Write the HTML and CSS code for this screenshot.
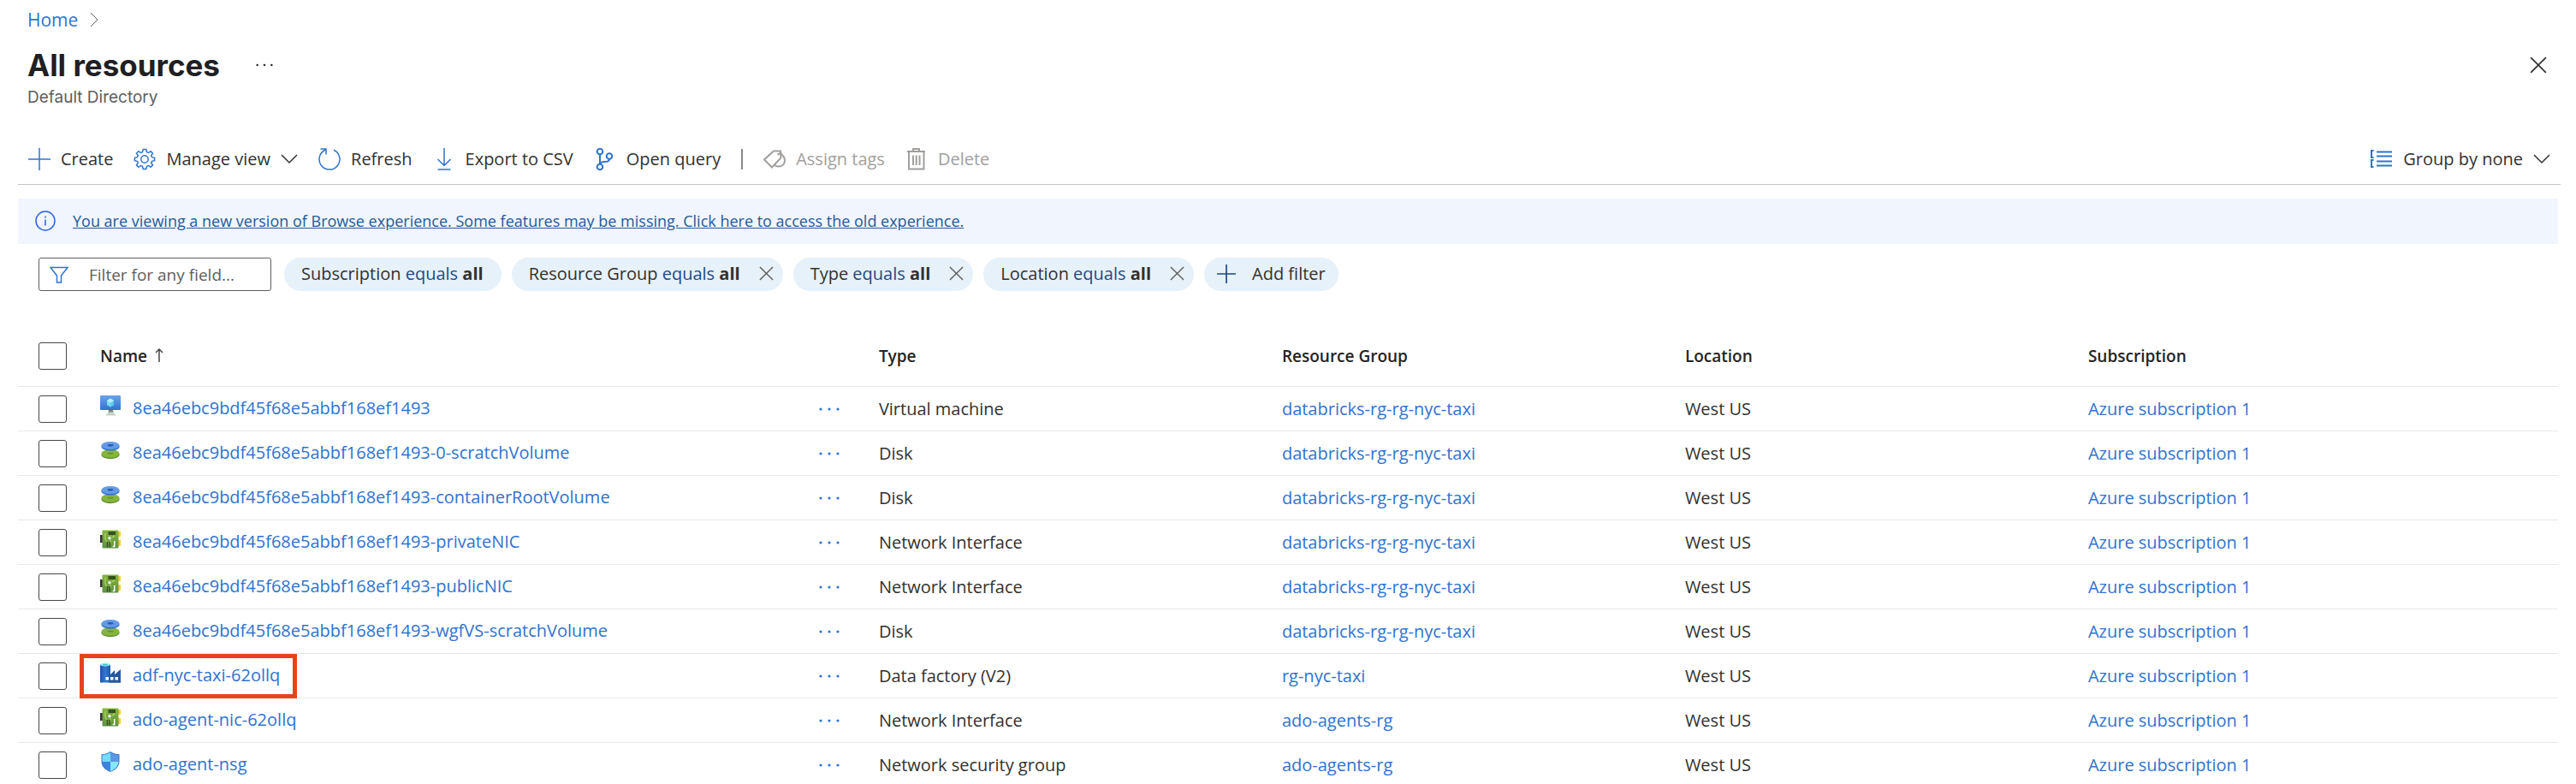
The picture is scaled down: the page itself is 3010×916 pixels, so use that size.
FILE: index.html
```html
<!DOCTYPE html>
<html lang="en">
<head>
<meta charset="utf-8">
<title>All resources</title>
<link rel="stylesheet" href="styles.css">
</head>
<body>
<svg class="sprite" aria-hidden="true">
  <defs>
    <linearGradient id="g-screen" x1="0" y1="0" x2="0" y2="1"><stop offset="0" stop-color="#6aa3ea"/><stop offset="1" stop-color="#2f74d0"/></linearGradient>
    <linearGradient id="g-stand" x1="0" y1="0" x2="0" y2="1"><stop offset="0" stop-color="#707070"/><stop offset="1" stop-color="#d5d5d5"/></linearGradient>
    <linearGradient id="g-board" x1="0" y1="0" x2="0" y2="1"><stop offset="0" stop-color="#86b53c"/><stop offset="1" stop-color="#5f9146"/></linearGradient>
    <linearGradient id="g-tower" x1="0" y1="0" x2="1" y2="0"><stop offset="0" stop-color="#1c55a3"/><stop offset="0.5" stop-color="#3478d2"/><stop offset="1" stop-color="#1f59a6"/></linearGradient>
  </defs>
  <symbol id="i-vm" viewBox="0 0 24 24">
    <path d="M10 17h5l1 5H9z" fill="url(#g-stand)"/><path d="M6.500 22.500q2-1 3-2.500h6q1 1.500 3 2.500v1h-12z" fill="#cfcfcf"/>
    <rect width="24" height="17" rx="1" fill="url(#g-screen)"/>
    <path d="M12 3.500l4 2.500v5l-4 2.500L8 11V6z" fill="#7fdcf7"/><path d="M12 8.500l4-2.500v5l-4 2.500z" fill="#5fc9ee"/><path d="M12 3.500l4 2.500-4 2.500L8 6z" fill="#b5effc"/>
  </symbol>
  <symbol id="i-disk" viewBox="0 0 24 24">
    <path d="M1.500 16v1.500c0 2.500 4.700 4.700 10.500 4.700s10.500-2.200 10.500-4.700V16z" fill="#5c8f35"/><ellipse cx="12" cy="16" rx="10.500" ry="4.800" fill="#86b53c"/><ellipse cx="12" cy="15.700" rx="3.500" ry="0.900" fill="#5c8f35"/>
    <path d="M1.500 6.500v1.500c0 2.500 4.700 4.500 10.500 4.500s10.500-2 10.500-4.500v-1.500z" fill="#2f6fd0"/><ellipse cx="12" cy="6.500" rx="10.500" ry="4.500" fill="#659be6"/><ellipse cx="12" cy="6.300" rx="3.500" ry="1.200" fill="#255bb0"/>
  </symbol>
  <symbol id="i-nic" viewBox="0 0 24 24">
    <rect x="0" y="7" width="4" height="9" fill="#333"/><rect x="20" y="3" width="4" height="6" fill="#ffcb3d"/><rect x="20" y="13" width="4" height="7" fill="#ffcb3d"/>
    <rect x="2.500" y="1.500" width="19" height="21" rx="1" fill="url(#g-board)"/>
    <rect x="9.500" y="3" width="8.500" height="4" fill="#35521c"/>
    <path d="M6 5v7l2 3M14 10l3-2M12 13v4" stroke="#b0dc60" stroke-width="1.200" fill="none"/>
    <circle cx="11" cy="10.700" r="1.700" fill="#fff"/><path d="M8.500 15v6.500M11.200 15v6.500" stroke="#35521c" stroke-width="1.400"/><path d="M16.700 14v6.500h-2" stroke="#fff" stroke-width="1.500" fill="none"/>
  </symbol>
  <symbol id="i-factory" viewBox="0 0 24 24">
    <path d="M11 15l6-6v5l7-6v15.500H11z" fill="#2459a0"/><path d="M0 2.500h12v21H0z" fill="url(#g-tower)"/><path d="M11 17h13v6.500H11z" fill="#2459a0"/>
    <ellipse cx="6" cy="2.500" rx="6" ry="1.900" fill="#9aeafc"/><ellipse cx="6" cy="2.700" rx="3" ry="0.900" fill="#3fbfe0"/>
    <path d="M6.500 17H10v3.500H6.500zM12 17h3.500v3.500H12zM17.500 17H21v3.500h-3.500z" fill="#fff"/>
  </symbol>
  <symbol id="i-shield" viewBox="0 0 24 24">
    <path d="M12 0Q8 3 1.500 3.200V12C1.500 18.500 8 22.500 12 24 16 22.500 22.500 18.500 22.500 12V3.200Q16 3 12 0z" fill="#3a7bd5"/>
    <path d="M12 1.200Q8 4 2.500 4.200V12H12z" fill="#73dcf9"/><path d="M12 1.200Q16 4 21.500 4.200V12H12z" fill="#5a96e2"/>
    <path d="M2.500 12C2.500 17.500 8 21.500 12 23.200V12z" fill="#3f82dc"/><path d="M21.500 12C21.500 17.500 16 21.500 12 23.200V12z" fill="#86e6fb"/>
  </symbol>
  <symbol id="i-x" viewBox="0 0 18 18"><path d="M1 1l16 16M17 1L1 17"/></symbol>
  <symbol id="i-down" viewBox="0 0 20 12"><path d="M1 1l9 9 9-9"/></symbol>
  <symbol id="i-plus" viewBox="0 0 26 26"><path d="M13 0v26M0 13h26"/></symbol>
  <symbol id="i-dots" viewBox="0 0 24 6"><circle cx="2" cy="3" r="1.600"/><circle cx="12" cy="3" r="1.600"/><circle cx="22" cy="3" r="1.600"/></symbol>
</svg>

<header class="head">
  <nav class="crumbs" aria-label="Breadcrumb"><a href="#">Home</a><svg class="crumb-sep" viewBox="0 0 10 18"><path d="M1 1l8 8-8 8"/></svg></nav>
  <div class="title-row">
    <h1>All resources</h1>
    <button class="plain" aria-label="More"><svg class="title-dots" viewBox="0 0 24 6"><use href="#i-dots"/></svg></button>
    <button class="plain close" aria-label="Close"><svg class="x-big"><use href="#i-x"/></svg></button>
  </div>
  <p class="subtitle">Default Directory</p>
</header>

<div class="toolbar" role="toolbar">
  <button class="cmd"><svg class="ico"><use href="#i-plus"/></svg>Create</button>
  <button class="cmd"><svg class="ico" viewBox="0 0 26 26"><path d="M11.200 1.500 L14.800 1.500 L15.500 4.600 L17.600 5.500 L20.100 3.700 L22.500 6.100 L20.700 8.700 L21.500 10.700 L24.600 11.300 L24.600 14.700 L21.500 15.300 L20.700 17.300 L22.500 19.900 L20.100 22.300 L17.600 20.500 L15.500 21.400 L14.800 24.500 L11.200 24.500 L10.500 21.400 L8.400 20.500 L5.900 22.300 L3.500 19.900 L5.300 17.300 L4.500 15.300 L1.400 14.700 L1.400 11.300 L4.500 10.700 L5.300 8.700 L3.500 6.100 L5.900 3.700 L8.400 5.500 L10.500 4.600 Z"/><circle cx="13" cy="13" r="4.200"/></svg>Manage view<svg class="chev"><use href="#i-down"/></svg></button>
  <button class="cmd"><svg class="ico" viewBox="0 0 26 26"><path d="M18 2.200A12 12 0 1 1 8.500 2M2.500 1H9v6.500"/></svg>Refresh</button>
  <button class="cmd"><svg class="ico" viewBox="0 0 26 26"><path d="M13 0v20.500M5.500 13l7.500 7.500 7.500-7.500M5.500 25h15"/></svg>Export to CSV</button>
  <button class="cmd"><svg class="ico bold" viewBox="0 0 26 26"><circle cx="7" cy="4" r="3.300"/><circle cx="7" cy="22" r="3.300"/><circle cx="18" cy="9.500" r="3.300"/><path d="M7 7.500v11M18 13c0 3-3 3-5.500 3S7 17 7 18.500"/></svg>Open query</button>
  <span class="divider"></span>
  <button class="cmd" disabled><svg class="ico bold" viewBox="0 0 26 26"><path d="M12 3.500h8l.5 8L10 22.500 1 13.500z"/><path d="M16.500 7.500l3.500-1.500q5 4 5 8.500c0 4.500-3.500 7-7.500 7-1.500 0-3-.5-4-1.500"/></svg>Assign tags</button>
  <button class="cmd" disabled><svg class="ico bold" viewBox="0 0 26 26"><path d="M2 4h21M9 4V1h7v3M4 4v20.500h17.500V4M9 8.500V20M12.700 8.500V20M16.500 8.500V20"/></svg>Delete</button>
  <button class="cmd group"><svg class="ico bold" viewBox="0 0 26 26"><path d="M3.500 3H1v8h2.500M3.500 14H1v8h2.500M7 4.500h18M7 9.500h18M7 15.500h18M7 20.500h18"/></svg>Group by none<svg class="chev"><use href="#i-down"/></svg></button>
</div>

<div class="banner">
  <svg class="info" viewBox="0 0 24 24"><circle cx="12" cy="12" r="11"/><path d="M12 10.500v7M12 6.500v2"/></svg>
  <a href="#">You are viewing a new version of Browse experience. Some features may be missing. Click here to access the old experience.</a>
</div>

<div class="filters">
  <label class="search"><svg class="funnel" viewBox="0 0 22 20"><path d="M1 1.500h20L13.500 11v8h-5v-8z"/></svg><input type="text" placeholder="Filter for any field..." aria-label="Filter for any field"></label>
  <div class="pill"><button class="pill-text">Subscription <span>equals</span> <b>all</b></button></div>
  <div class="pill"><button class="pill-text">Resource Group <span>equals</span> <b>all</b></button><button class="plain" aria-label="Remove"><svg class="x-small"><use href="#i-x"/></svg></button></div>
  <div class="pill"><button class="pill-text">Type <span>equals</span> <b>all</b></button><button class="plain" aria-label="Remove"><svg class="x-small"><use href="#i-x"/></svg></button></div>
  <div class="pill"><button class="pill-text">Location <span>equals</span> <b>all</b></button><button class="plain" aria-label="Remove"><svg class="x-small"><use href="#i-x"/></svg></button></div>
  <button class="pill add"><svg class="add-plus"><use href="#i-plus"/></svg>Add filter</button>
</div>

<table class="grid">
  <colgroup><col class="c-check"><col><col class="c-more"><col class="c-data"><col class="c-data"><col class="c-data"><col class="c-last"></colgroup>
  <thead>
    <tr><th><input type="checkbox" aria-label="Select all"></th><th>Name <svg class="sort" viewBox="0 0 10 16"><path d="M5 16V1M1 5l4-4 4 4"/></svg></th><th></th><th>Type</th><th>Resource Group</th><th>Location</th><th>Subscription</th></tr>
  </thead>
  <tbody>
    <tr><td><input type="checkbox" aria-label="Select"></td><td><span class="name"><svg><use href="#i-vm"/></svg><a href="#">8ea46ebc9bdf45f68e5abbf168ef1493</a></span></td><td><button class="plain more" aria-label="More"><svg><use href="#i-dots"/></svg></button></td><td>Virtual machine</td><td><a href="#">databricks-rg-rg-nyc-taxi</a></td><td>West US</td><td><a href="#">Azure subscription 1</a></td></tr>
    <tr><td><input type="checkbox" aria-label="Select"></td><td><span class="name"><svg><use href="#i-disk"/></svg><a href="#">8ea46ebc9bdf45f68e5abbf168ef1493-0-scratchVolume</a></span></td><td><button class="plain more" aria-label="More"><svg><use href="#i-dots"/></svg></button></td><td>Disk</td><td><a href="#">databricks-rg-rg-nyc-taxi</a></td><td>West US</td><td><a href="#">Azure subscription 1</a></td></tr>
    <tr><td><input type="checkbox" aria-label="Select"></td><td><span class="name"><svg><use href="#i-disk"/></svg><a href="#">8ea46ebc9bdf45f68e5abbf168ef1493-containerRootVolume</a></span></td><td><button class="plain more" aria-label="More"><svg><use href="#i-dots"/></svg></button></td><td>Disk</td><td><a href="#">databricks-rg-rg-nyc-taxi</a></td><td>West US</td><td><a href="#">Azure subscription 1</a></td></tr>
    <tr><td><input type="checkbox" aria-label="Select"></td><td><span class="name"><svg><use href="#i-nic"/></svg><a href="#">8ea46ebc9bdf45f68e5abbf168ef1493-privateNIC</a></span></td><td><button class="plain more" aria-label="More"><svg><use href="#i-dots"/></svg></button></td><td>Network Interface</td><td><a href="#">databricks-rg-rg-nyc-taxi</a></td><td>West US</td><td><a href="#">Azure subscription 1</a></td></tr>
    <tr><td><input type="checkbox" aria-label="Select"></td><td><span class="name"><svg><use href="#i-nic"/></svg><a href="#">8ea46ebc9bdf45f68e5abbf168ef1493-publicNIC</a></span></td><td><button class="plain more" aria-label="More"><svg><use href="#i-dots"/></svg></button></td><td>Network Interface</td><td><a href="#">databricks-rg-rg-nyc-taxi</a></td><td>West US</td><td><a href="#">Azure subscription 1</a></td></tr>
    <tr><td><input type="checkbox" aria-label="Select"></td><td><span class="name"><svg><use href="#i-disk"/></svg><a href="#">8ea46ebc9bdf45f68e5abbf168ef1493-wgfVS-scratchVolume</a></span></td><td><button class="plain more" aria-label="More"><svg><use href="#i-dots"/></svg></button></td><td>Disk</td><td><a href="#">databricks-rg-rg-nyc-taxi</a></td><td>West US</td><td><a href="#">Azure subscription 1</a></td></tr>
    <tr><td><input type="checkbox" aria-label="Select"></td><td><span class="name marked"><svg><use href="#i-factory"/></svg><a href="#">adf-nyc-taxi-62ollq</a></span></td><td><button class="plain more" aria-label="More"><svg><use href="#i-dots"/></svg></button></td><td>Data factory (V2)</td><td><a href="#">rg-nyc-taxi</a></td><td>West US</td><td><a href="#">Azure subscription 1</a></td></tr>
    <tr><td><input type="checkbox" aria-label="Select"></td><td><span class="name"><svg><use href="#i-nic"/></svg><a href="#">ado-agent-nic-62ollq</a></span></td><td><button class="plain more" aria-label="More"><svg><use href="#i-dots"/></svg></button></td><td>Network Interface</td><td><a href="#">ado-agents-rg</a></td><td>West US</td><td><a href="#">Azure subscription 1</a></td></tr>
    <tr><td><input type="checkbox" aria-label="Select"></td><td><span class="name"><svg><use href="#i-shield"/></svg><a href="#">ado-agent-nsg</a></span></td><td><button class="plain more" aria-label="More"><svg><use href="#i-dots"/></svg></button></td><td>Network security group</td><td><a href="#">ado-agents-rg</a></td><td>West US</td><td><a href="#">Azure subscription 1</a></td></tr>
  </tbody>
</table>
</body>
</html>
```
FILE: styles.css
```css
* { box-sizing: border-box; }
body {
  margin: 0;
  height: 100vh;
  overflow: hidden;
  background: #fff;
  color: #323130;
  font: 20px/26px "Open Sans", "Noto Sans", sans-serif;
}
button, input { font: inherit; color: inherit; }
button { margin: 0; padding: 0; border: 0; background: none; white-space: nowrap; }
a { color: #2f73d0; text-decoration: none; }
svg { display: block; flex: none; fill: none; stroke: currentColor; }
.sprite { position: absolute; width: 0; height: 0; }
.plain { display: flex; align-items: center; }

.head { padding: 10px 32px 0; }
.crumbs { display: flex; align-items: center; gap: 14px; font-size: 21px; }
.crumb-sep { width: 10px; height: 18px; color: #605e5c; }
.title-row { display: flex; align-items: center; margin-top: 16px; }
h1 { margin: 0; font: 700 35px/48px Inter, sans-serif; color: #201f24; }
.title-dots { width: 20px; height: 6px; margin-left: 42px; fill: #323130; stroke: none; }
.close { margin-left: auto; padding-right: 2px; }
.x-big { width: 20px; height: 20px; stroke-width: 1.500; }
.subtitle { margin: 2px 0 0; font: 19px/24px Inter, sans-serif; color: #605e5c; }

.toolbar {
  display: flex;
  align-items: center;
  gap: 24px;
  height: 60px;
  margin: 30px 18px 0 21px;
  padding: 0 12px;
  border-bottom: 1px solid #c8c6c4;
}
.cmd { display: flex; align-items: center; gap: 12px; }
.cmd:disabled { color: #a19f9d; }
.ico { width: 26px; height: 26px; color: #2f73d0; stroke-width: 1.500; }
.cmd:disabled .ico { color: #a19f9d; }
.bold { stroke-width: 2; }
.chev { width: 20px; height: 12px; stroke-width: 1.500; }
.group { margin-left: auto; }
.divider { width: 2px; height: 24px; background: #8a8886; }

.banner {
  display: flex;
  align-items: center;
  gap: 20px;
  height: 53px;
  margin: 16px 21px 0;
  padding: 0 20px 2px;
  background: #f0f5fe;
}
.banner a { font-size: 18px; color: #255a9b; text-decoration: underline; }
.info { width: 24px; height: 24px; color: #2b62e0; stroke-width: 1.500; }

.filters { display: flex; gap: 12px; margin: 16px 45px 0; }
.search {
  display: flex;
  align-items: center;
  gap: 24px;
  width: 272px;
  height: 39px;
  margin-right: 3px;
  padding: 0 12px;
  border: 1px solid #605e5c;
  border-radius: 3px;
}
.search input { flex: 1; min-width: 0; padding: 0; border: 0; outline: 0; background: none; font-size: 19px; }
.search input::placeholder { color: #605e5c; opacity: 1; }
.funnel { width: 22px; height: 20px; color: #2f73d0; stroke-width: 1.500; }
.pill {
  display: flex;
  align-items: center;
  gap: 22px;
  height: 39px;
  padding: 0 11px 2px 20px;
  border-radius: 20px;
  background: #e6f1fa;
}
.pill-text:only-child { padding-right: 10px; }
.pill-text span { color: #1f4a80; }
.x-small { width: 17px; height: 17px; color: #605e5c; stroke-width: 1.500; }
.add { gap: 19px; padding: 0 15px 2px; }
.add-plus { width: 22px; height: 22px; color: #1f4a80; stroke-width: 2; }

.grid {
  width: calc(100% - 42px);
  margin: 41px 21px 0;
  border-collapse: separate;
  border-spacing: 0;
  table-layout: fixed;
}
.c-check { width: 96px; }
.c-more { width: 78px; }
.c-data { width: 15.87%; }
.c-last { width: 18.5%; }
.grid th, .grid td { height: 52px; padding: 0; border-bottom: 1px solid #e8e8e8; text-align: left; vertical-align: middle; white-space: nowrap; }
.grid th { height: 71px; font-size: 19px; font-weight: 600; color: #252423; }
.grid input {
  appearance: none;
  display: block;
  width: 33px;
  height: 32px;
  margin: 0 0 0 24px;
  border: 1px solid #484644;
  border-radius: 3px;
  background: #fff;
}
.sort { display: inline-block; width: 10px; height: 16px; margin-left: 4px; color: #484644; stroke-width: 1.500; }
.name { position: relative; display: inline-flex; align-items: center; gap: 14px; height: 26px; }
.name svg { width: 24px; height: 24px; margin-bottom: 6px; stroke: none; }
.marked::after {
  content: "";
  position: absolute;
  inset: -12px -20px -14px -24px;
  border: 5px solid #e94120;
}
.more { padding-left: 7px; }
.more svg { width: 26px; height: 6px; fill: #2f73d0; stroke: none; }
```
